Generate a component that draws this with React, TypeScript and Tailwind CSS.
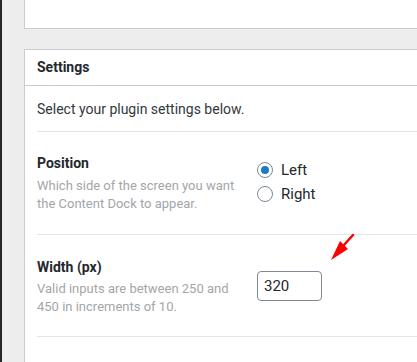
import React from "react";

export default function App() {
  const font = { fontFamily: "Roboto, 'Noto Sans', sans-serif" };
  return (
    <div className="w-[417px] h-[362px] overflow-hidden flex bg-[#ededed] relative" style={font}>
      <div className="w-[2px] shrink-0 bg-[#23282d]" />
      <div className="flex-1 pl-[22px] flex flex-col">
        <div className="h-[29px] w-[500px] bg-white border-l border-b border-[#c9cdd1]" />
        <div className="mt-[20px] w-[500px] flex-1 bg-white border-l border-t border-[#c9cdd1]">
          <div className="h-[36px] flex items-center pl-[12px] border-b border-[#c9cdd1] text-[14px] font-bold text-[#23282d]">
            Settings
          </div>
          <div className="pl-[12px]">
            <div className="h-[45px] flex items-center pt-[1px] text-[14px] text-[#32373c]">
              Select your plugin settings below.
            </div>
            <div className="border-t border-[#e3e5e8] pt-[22px] pb-[21px] flex">
              <div className="w-[220px]">
                <div className="text-[14px] leading-[18px] font-bold text-[#23282d]">Position</div>
                <div className="mt-[5px] text-[13px] leading-[18px] text-[#a3a6a9]">
                  Which side of the screen you want
                  <br />
                  the Content Dock to appear.
                </div>
              </div>
              <div className="pt-[4px] flex flex-col">
                <label className="h-[24px] flex items-center gap-[8px] text-[15px] text-[#23282d]">
                  <span className="w-[16px] h-[16px] rounded-full border border-[#7e8993] flex items-center justify-center">
                    <span className="w-[8px] h-[8px] rounded-full bg-[#1e7bc3]" />
                  </span>
                  Left
                </label>
                <label className="h-[24px] flex items-center gap-[8px] text-[15px] text-[#23282d]">
                  <span className="w-[16px] h-[16px] rounded-full border border-[#7e8993]" />
                  Right
                </label>
              </div>
            </div>
            <div className="border-t border-[#e3e5e8] pt-[23px] pb-[20px] flex">
              <div className="w-[220px]">
                <div className="text-[14px] leading-[18px] font-bold text-[#23282d]">Width (px)</div>
                <div className="mt-[4px] text-[13px] leading-[18px] text-[#a3a6a9]">
                  Valid inputs are between 250 and
                  <br />
                  450 in increments of 10.
                </div>
              </div>
              <div className="pt-[13px]">
                <div className="w-[65px] h-[30px] rounded-[4px] border border-[#7e8993] flex items-center pl-[6px] text-[15px] text-[#23282d]">
                  320
                </div>
              </div>
            </div>
            <div className="border-t border-[#e3e5e8]" />
          </div>
        </div>
      </div>
      <svg className="absolute left-[326px] top-[230px]" width="32" height="34" viewBox="0 0 32 34">
        <line x1="27" y1="5" x2="17" y2="16" stroke="#ff0000" strokeWidth="2.5" strokeLinecap="round" />
        <polygon points="5,30 14,11 22,19" fill="#ff0000" />
      </svg>
    </div>
  );
}
